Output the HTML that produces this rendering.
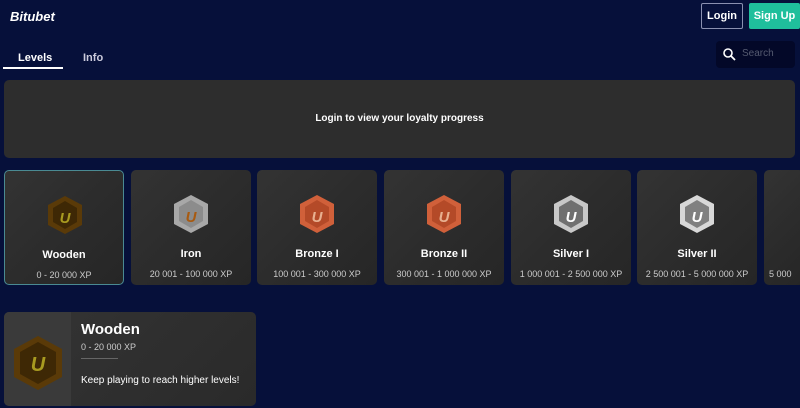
<!DOCTYPE html><html><head><style>
body{margin:0;width:800px;height:408px;background:#06103a;font-family:"Liberation Sans",sans-serif;color:#fff;overflow:hidden;position:relative}
.a{position:absolute}
.card{position:absolute;top:170px;width:120px;height:115px;border-radius:5px;background:linear-gradient(135deg,#333 0%,#2c2c2c 50%,#262626 100%);box-sizing:border-box}
.nm{position:absolute;top:78px;width:100%;text-align:center;font-size:11px;font-weight:bold}
.xp{position:absolute;top:99px;width:100%;text-align:center;font-size:9px;color:#ccc}
.bd{position:absolute;left:40px;top:24px}
</style></head><body>
<div class="a" style="left:10px;top:9px;font-size:13px;font-weight:bold;font-style:italic">Bitubet</div>
<div class="a" style="left:701px;top:3px;width:42px;height:26px;border:1px solid #8a90b0;box-sizing:border-box;border-radius:2px;font-size:11px;font-weight:bold;text-align:center;line-height:24px">Login</div>
<div class="a" style="left:749px;top:3px;width:51px;height:26px;background:#1fbf9c;border-radius:2px;font-size:11px;font-weight:bold;text-align:center;line-height:26px">Sign Up</div>
<div class="a" style="left:18px;top:52px;font-size:11px;font-weight:bold">Levels</div>
<div class="a" style="left:3px;top:67px;width:60px;height:2px;background:#fff"></div>
<div class="a" style="left:83px;top:52px;font-size:11px;font-weight:bold;color:#ccd">Info</div>
<div class="a" style="left:716px;top:41px;width:79px;height:27px;background:#030828;border-radius:4px"></div>
<svg class="a" style="left:722px;top:47px" width="14" height="14"><circle cx="6" cy="6" r="4" fill="none" stroke="#fff" stroke-width="1.6"/><path d="M9 9l4 4" stroke="#fff" stroke-width="1.8"/></svg>
<div class="a" style="left:742px;top:48px;font-size:10px;color:#555a70">Search</div>
<div class="a" style="left:4px;top:80px;width:791px;height:78px;background:#2d2d2d;border-radius:5px;font-size:10px;font-weight:bold;text-align:center;line-height:78px">Login to view your loyalty progress</div>

<div class="card" style="left:4px;border:1px solid #4a8a92"><svg class="bd" width="40" height="40"><polygon points="20,1 37,10 37,30 20,39 3,30 3,10" fill="#5a3a08"/><polygon points="20,6 32,13 32,27 20,34 8,27 8,13" fill="#3e2805"/><text x="20" y="28" font-size="15" font-weight="bold" font-style="italic" fill="#a89a20" text-anchor="middle">U</text></svg><div class="nm">Wooden</div><div class="xp">0 - 20 000 XP</div></div>
<div class="card" style="left:131px"><svg class="bd" width="40" height="40"><polygon points="20,1 37,10 37,30 20,39 3,30 3,10" fill="#a8a8a8"/><polygon points="20,6 32,13 32,27 20,34 8,27 8,13" fill="#8c8c8c"/><text x="20" y="28" font-size="15" font-weight="bold" font-style="italic" fill="#a85a10" text-anchor="middle">U</text></svg><div class="nm">Iron</div><div class="xp">20 001 - 100 000 XP</div></div>
<div class="card" style="left:257px"><svg class="bd" width="40" height="40"><polygon points="20,1 37,10 37,30 20,39 3,30 3,10" fill="#d0603a"/><polygon points="20,6 32,13 32,27 20,34 8,27 8,13" fill="#b44a28"/><text x="20" y="28" font-size="15" font-weight="bold" font-style="italic" fill="#e8b090" text-anchor="middle">U</text></svg><div class="nm">Bronze I</div><div class="xp">100 001 - 300 000 XP</div></div>
<div class="card" style="left:384px"><svg class="bd" width="40" height="40"><polygon points="20,1 37,10 37,30 20,39 3,30 3,10" fill="#d0603a"/><polygon points="20,6 32,13 32,27 20,34 8,27 8,13" fill="#b44a28"/><text x="20" y="28" font-size="15" font-weight="bold" font-style="italic" fill="#e8b090" text-anchor="middle">U</text></svg><div class="nm">Bronze II</div><div class="xp">300 001 - 1 000 000 XP</div></div>
<div class="card" style="left:511px"><svg class="bd" width="40" height="40"><polygon points="20,1 37,10 37,30 20,39 3,30 3,10" fill="#c8c8c8"/><polygon points="20,6 32,13 32,27 20,34 8,27 8,13" fill="#707070"/><text x="20" y="28" font-size="15" font-weight="bold" font-style="italic" fill="#fff" text-anchor="middle">U</text></svg><div class="nm">Silver I</div><div class="xp">1 000 001 - 2 500 000 XP</div></div>
<div class="card" style="left:637px"><svg class="bd" width="40" height="40"><polygon points="20,1 37,10 37,30 20,39 3,30 3,10" fill="#d8d8d8"/><polygon points="20,6 32,13 32,27 20,34 8,27 8,13" fill="#808080"/><text x="20" y="28" font-size="15" font-weight="bold" font-style="italic" fill="#fff" text-anchor="middle">U</text></svg><div class="nm">Silver II</div><div class="xp">2 500 001 - 5 000 000 XP</div></div>
<div class="card" style="left:764px;width:40px"><div class="xp" style="text-align:left;left:5px">5 000</div></div>

<div class="a" style="left:4px;top:312px;width:252px;height:94px;background:linear-gradient(135deg,#343434,#2a2a2a);border-radius:5px;overflow:hidden">
<div class="a" style="left:0;top:0;width:67px;height:94px;background:#3a3a3a"></div>
<svg class="a" style="left:6px;top:23px" width="56" height="56"><polygon points="28,1 52,14 52,42 28,55 4,42 4,14" fill="#5a3a08"/><polygon points="28,7 46,17 46,39 28,49 10,39 10,17" fill="#3e2805"/><text x="28" y="36" font-size="20" font-weight="bold" font-style="italic" fill="#a89a20" text-anchor="middle">U</text></svg>
<div class="a" style="left:77px;top:9px;font-size:15px;font-weight:bold">Wooden</div>
<div class="a" style="left:77px;top:30px;font-size:9px;color:#ccc">0 - 20 000 XP</div>
<div class="a" style="left:77px;top:46px;width:37px;height:1px;background:#666"></div>
<div class="a" style="left:77px;top:63px;font-size:10px">Keep playing to reach higher levels!</div>
</div>
</body></html>
